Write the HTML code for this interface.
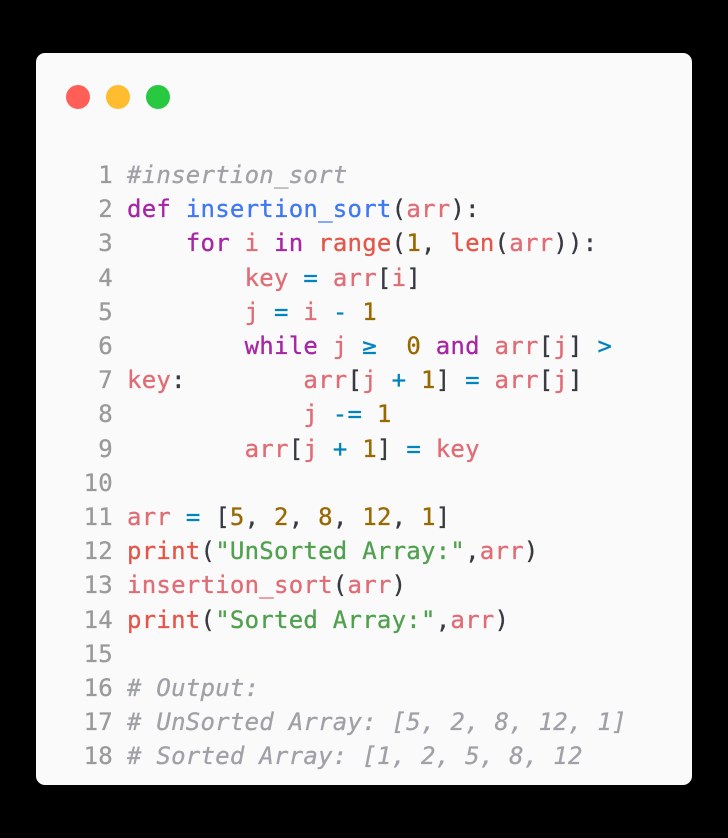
<!DOCTYPE html>
<html><head><style>
body{margin:0;background:#000;width:728px;height:838px;overflow:hidden}
.card{position:absolute;left:36px;top:53px;width:656px;height:732px;background:#fafafa;border-radius:9px}
.d{position:absolute;top:32px;width:24px;height:24px;border-radius:50%}
pre{position:absolute;left:0;top:105px;margin:0;font-family:"DejaVu Sans Mono","Liberation Mono",monospace;font-size:24px;line-height:34.2px;color:#383a42;letter-spacing:0.25px;-webkit-text-stroke:0.3px}
.n{color:#9a9a9a;display:inline-block;width:77px;text-align:right;margin-right:14px}
.k{color:#a626a4}.f{color:#4078f2}.v{color:#e06c75}.b{color:#e45649}.m{color:#986801}.o{color:#0184bc}.s{color:#50a14f}.c{color:#a0a1a7;font-style:italic}
</style></head><body>
<div class="card">
<div class="d" style="left:30px;background:#ff5f57"></div>
<div class="d" style="left:70px;background:#febc2e"></div>
<div class="d" style="left:110px;background:#28c840"></div>
<pre><span class="n">1</span><span class="c">#insertion_sort</span>
<span class="n">2</span><span class="k">def</span> <span class="f">insertion_sort</span>(<span class="v">arr</span>):
<span class="n">3</span>    <span class="k">for</span> <span class="v">i</span> <span class="k">in</span> <span class="b">range</span>(<span class="m">1</span>, <span class="b">len</span>(<span class="v">arr</span>)):
<span class="n">4</span>        <span class="v">key</span> <span class="o">=</span> <span class="v">arr</span>[<span class="v">i</span>]
<span class="n">5</span>        <span class="v">j</span> <span class="o">=</span> <span class="v">i</span> <span class="o">-</span> <span class="m">1</span>
<span class="n">6</span>        <span class="k">while</span> <span class="v">j</span> <span class="o">≥</span>  <span class="m">0</span> <span class="k">and</span> <span class="v">arr</span>[<span class="v">j</span>] <span class="o">&gt;</span>
<span class="n">7</span><span class="v">key</span>:        <span class="v">arr</span>[<span class="v">j</span> <span class="o">+</span> <span class="m">1</span>] <span class="o">=</span> <span class="v">arr</span>[<span class="v">j</span>]
<span class="n">8</span>            <span class="v">j</span> <span class="o">-=</span> <span class="m">1</span>
<span class="n">9</span>        <span class="v">arr</span>[<span class="v">j</span> <span class="o">+</span> <span class="m">1</span>] <span class="o">=</span> <span class="v">key</span>
<span class="n">10</span>
<span class="n">11</span><span class="v">arr</span> <span class="o">=</span> [<span class="m">5</span>, <span class="m">2</span>, <span class="m">8</span>, <span class="m">12</span>, <span class="m">1</span>]
<span class="n">12</span><span class="b">print</span>(<span class="s">"UnSorted Array:"</span>,<span class="v">arr</span>)
<span class="n">13</span><span class="v">insertion_sort</span>(<span class="v">arr</span>)
<span class="n">14</span><span class="b">print</span>(<span class="s">"Sorted Array:"</span>,<span class="v">arr</span>)
<span class="n">15</span>
<span class="n">16</span><span class="c"># Output:</span>
<span class="n">17</span><span class="c"># UnSorted Array: [5, 2, 8, 12, 1]</span>
<span class="n">18</span><span class="c"># Sorted Array: [1, 2, 5, 8, 12</span></pre>
</div>
</body></html>
